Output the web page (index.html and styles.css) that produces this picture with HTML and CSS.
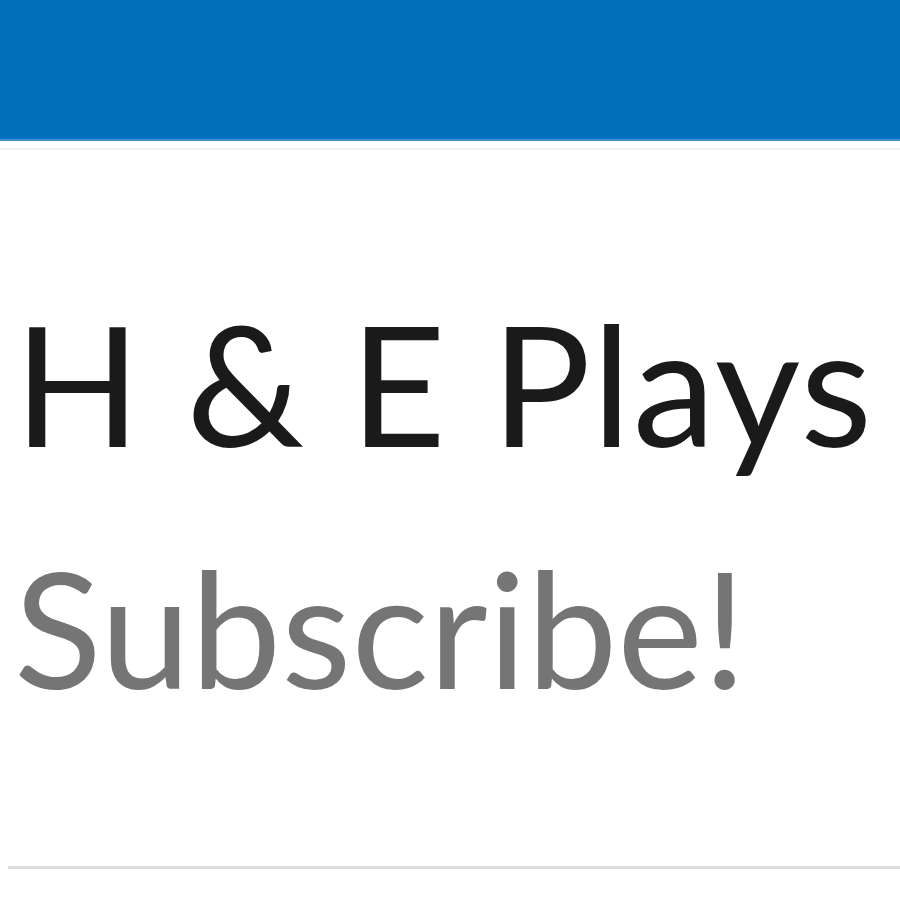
FILE: index.html
```html
<!DOCTYPE html>
<html lang="en">
<head>
  <meta charset="UTF-8" />
  <title>H &amp; E Plays</title>
  <link rel="stylesheet" href="styles.css">
</head>
<body>

<header class="topbar"></header>
<div class="rule-top"></div>

<main class="channel">
  <h1 class="channel-name">H &amp; E Plays</h1>
  <p class="channel-sub">Subscribe!</p>
</main>

<div class="rule-bottom"></div>

</body>
</html>
```

FILE: styles.css
```css
* { margin: 0; padding: 0; box-sizing: border-box; }
body {
  font-family: Lato, 'Noto Sans', sans-serif;
  background: #fff;
  width: 900px;
  height: 900px;
  overflow: hidden;
}
.topbar {
  height: 141px;
  background: #0271bb;
  border-bottom: 2px solid #3f8fd0;
}
.rule-top {
  margin-top: 7px;
  height: 2px;
  background: #f1f2f6;
}
.channel {
  padding: 150px 0 0 14px;
  height: 716px;
}
.channel-name {
  font-size: 166px;
  font-weight: 400;
  line-height: 1;
  letter-spacing: 1.5px;
  color: #1a1a1a;
  white-space: nowrap;
}
.channel-sub {
  margin-top: 80px;
  font-size: 162px;
  line-height: 1;
  color: #757575;
  white-space: nowrap;
}
.rule-bottom {
  margin-left: 8px;
  height: 3px;
  background: #dcdcdc;
}
```
